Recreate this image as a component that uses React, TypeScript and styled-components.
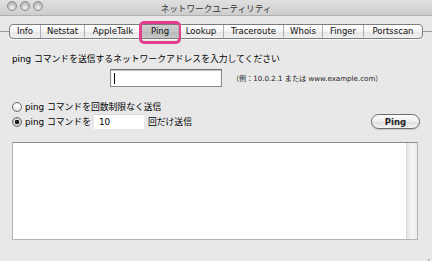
import React from 'react'
import styled, { createGlobalStyle } from 'styled-components'

const GlobalStyle = createGlobalStyle`
  html, body {
    margin: 0;
    padding: 0;
    background: #e8e8e8;
  }
  body {
    font-family: "DejaVu Sans", "Noto Sans CJK JP", sans-serif;
    color: #000;
  }
`

type Tab = {
  label: string
  width: number
}

const tabs: Tab[] = [
  { label: 'Info', width: 31 },
  { label: 'Netstat', width: 44 },
  { label: 'AppleTalk', width: 57 },
  { label: 'Ping', width: 37 },
  { label: 'Lookup', width: 45 },
  { label: 'Traceroute', width: 60 },
  { label: 'Whois', width: 39 },
  { label: 'Finger', width: 41 },
  { label: 'Portsscan', width: 60 },
]

const selectedTab = 'Ping'

export default function App() {
  return (
    <>
      <GlobalStyle />
      <Window>
        <TitleBar>
          <Lights>
            <Light />
            <Light />
            <Light />
          </Lights>
          <Title>ネットワークユーティリティ</Title>
        </TitleBar>

        <TabRow>
          <TabLine />
          <TabStrip>
            {tabs.map((tab, i) => (
              <TabButton
                key={tab.label}
                $width={tab.width}
                $selected={tab.label === selectedTab}
                $first={i === 0}
                $last={i === tabs.length - 1}
              >
                {tab.label}
                {tab.label === selectedTab && <Highlight />}
              </TabButton>
            ))}
          </TabStrip>
          <TabLine />
        </TabRow>

        <Content>
          <Label>ping コマンドを送信するネットワークアドレスを入力してください</Label>
          <AddressRow>
            <AddressInput>
              <Caret />
            </AddressInput>
            <Hint>（例：10.0.2.1 または www.example.com）</Hint>
          </AddressRow>

          <RadioGroup>
            <RadioRow>
              <Radio />
              <RadioText>ping コマンドを回数制限なく送信</RadioText>
            </RadioRow>
            <RadioRow>
              <Radio $checked />
              <RadioText>ping コマンドを</RadioText>
              <CountInput>10</CountInput>
              <RadioText>回だけ送信</RadioText>
              <PingButton>Ping</PingButton>
            </RadioRow>
          </RadioGroup>

          <Output>
            <ScrollTrack />
          </Output>
        </Content>

        <Grip>
          <svg width="9" height="9" viewBox="0 0 9 9">
            <path d="M8 2 L2 8 M8 5 L5 8" stroke="#8a8a8a" strokeWidth="1" />
            <path d="M9 3 L3 9 M9 6 L6 9" stroke="#fff" strokeWidth="1" />
          </svg>
        </Grip>
      </Window>
    </>
  )
}

const Window = styled.div`
  position: relative;
  width: 432px;
  height: 261px;
  overflow: hidden;
  background: #e8e8e8;
  display: flex;
  flex-direction: column;
`

const TitleBar = styled.div`
  height: 15px;
  display: flex;
  align-items: center;
  justify-content: center;
  position: relative;
  background: linear-gradient(#e0e0e0, #cdcdcd);
  border-bottom: 1px solid #b0b0b0;
`

const Lights = styled.div`
  position: absolute;
  left: 7px;
  top: 1px;
  display: flex;
  gap: 3px;
`

const Light = styled.div`
  width: 10px;
  height: 10px;
  border-radius: 50%;
  box-sizing: border-box;
  border: 1px solid #8c8c8c;
  background: radial-gradient(circle at 50% 70%, #f2f2f2, #b8b8b8 70%);
`

const Title = styled.div`
  font-family: "Noto Sans CJK JP", sans-serif;
  font-size: 8.6px;
  color: #303030;
  line-height: 12px;
`

const TabRow = styled.div`
  display: flex;
  align-items: center;
  margin-top: 7px;
  height: 16px;
`

const TabLine = styled.div`
  flex: 1;
  height: 1px;
  background: #9a9a9a;
`

const TabStrip = styled.div`
  display: flex;
  height: 15px;
  box-sizing: border-box;
  border: 1px solid #7c7c7c;
  border-radius: 4px;
  background: linear-gradient(#ffffff, #f4f4f4 50%, #e6e6e6 51%, #f0f0f0);
  box-shadow: 0 1px 0 rgba(255, 255, 255, 0.7);
`

const TabButton = styled.div<{
  $width: number
  $selected: boolean
  $first: boolean
  $last: boolean
}>`
  position: relative;
  width: ${(p) => p.$width - (p.$first || p.$last ? 1 : 0)}px;
  box-sizing: border-box;
  display: flex;
  align-items: center;
  justify-content: center;
  font-size: 8.5px;
  color: #111;
  border-left: ${(p) => (p.$first ? 'none' : '1px solid #b0b0b0')};
  background: ${(p) =>
    p.$selected ? 'linear-gradient(#cfcfcf, #c4c4c4 50%, #b8b8b8 51%, #c8c8c8)' : 'transparent'};
`

const Highlight = styled.div`
  position: absolute;
  left: -3px;
  right: -3px;
  top: -4px;
  bottom: -6px;
  border: 3px solid #e2408c;
  border-radius: 5px;
`

const Content = styled.div`
  flex: 1;
  display: flex;
  flex-direction: column;
  padding: 13px 14px 0 12px;
`

const Label = styled.div`
  font-size: 8.8px;
  line-height: 14px;
  height: 14px;
`

const AddressRow = styled.div`
  display: flex;
  align-items: center;
  margin-top: 3px;
  padding-left: 98px;
`

const AddressInput = styled.div`
  width: 112px;
  height: 18px;
  box-sizing: border-box;
  background: #fff;
  border: 1px solid #8a8a8a;
  border-top-color: #6e6e6e;
  box-shadow: inset 0 1px 1px rgba(0, 0, 0, 0.25);
  display: flex;
  align-items: center;
  padding-left: 3px;
`

const Caret = styled.div`
  width: 1px;
  height: 11px;
  background: #000;
`

const Hint = styled.div`
  margin-left: 10px;
  font-size: 7.1px;
  color: #222;
`

const RadioGroup = styled.div`
  display: flex;
  flex-direction: column;
  margin-top: 12px;
`

const RadioRow = styled.div`
  display: flex;
  align-items: center;
  height: 15px;
`

const Radio = styled.div<{ $checked?: boolean }>`
  width: 10px;
  height: 10px;
  box-sizing: border-box;
  border-radius: 50%;
  border: 1px solid #6a6a6a;
  background: ${(p) =>
    p.$checked
      ? 'radial-gradient(circle, #202020 0 2px, #d8d8d8 2.5px, #b8b8b8 100%)'
      : 'radial-gradient(circle at 50% 30%, #ffffff, #dcdcdc)'};
  margin-right: 3px;
`

const RadioText = styled.div`
  font-size: 8.8px;
  line-height: 14px;
`

const CountInput = styled.div`
  width: 50px;
  height: 15px;
  box-sizing: border-box;
  margin: 0 4px 0 3px;
  background: #fff;
  border-top: 1px solid #d6d6d6;
  font-size: 8.8px;
  line-height: 14px;
  padding-left: 5px;
`

const PingButton = styled.div`
  margin-left: auto;
  margin-right: -2px;
  width: 49px;
  height: 15px;
  box-sizing: border-box;
  border: 1px solid #6c6c6c;
  border-radius: 8px;
  background: linear-gradient(#fdfdfd, #eeeeee 50%, #dcdcdc 51%, #f4f4f4);
  box-shadow: 0 1px 1px rgba(0, 0, 0, 0.15);
  display: flex;
  align-items: center;
  justify-content: center;
  font-size: 8.5px;
  font-weight: bold;
  color: #222;
`

const Output = styled.div`
  margin-top: 13px;
  height: 98px;
  box-sizing: border-box;
  background: #fff;
  border: 1px solid #b4b4b4;
  border-top-color: #8c8c8c;
  display: flex;
  justify-content: flex-end;
`

const ScrollTrack = styled.div`
  width: 10px;
  background: linear-gradient(90deg, #e4e4e4, #f6f6f6 50%, #ececec);
  border-left: 1px solid #dcdcdc;
`

const Grip = styled.div`
  position: absolute;
  right: 1px;
  bottom: 1px;
  width: 9px;
  height: 9px;
`
